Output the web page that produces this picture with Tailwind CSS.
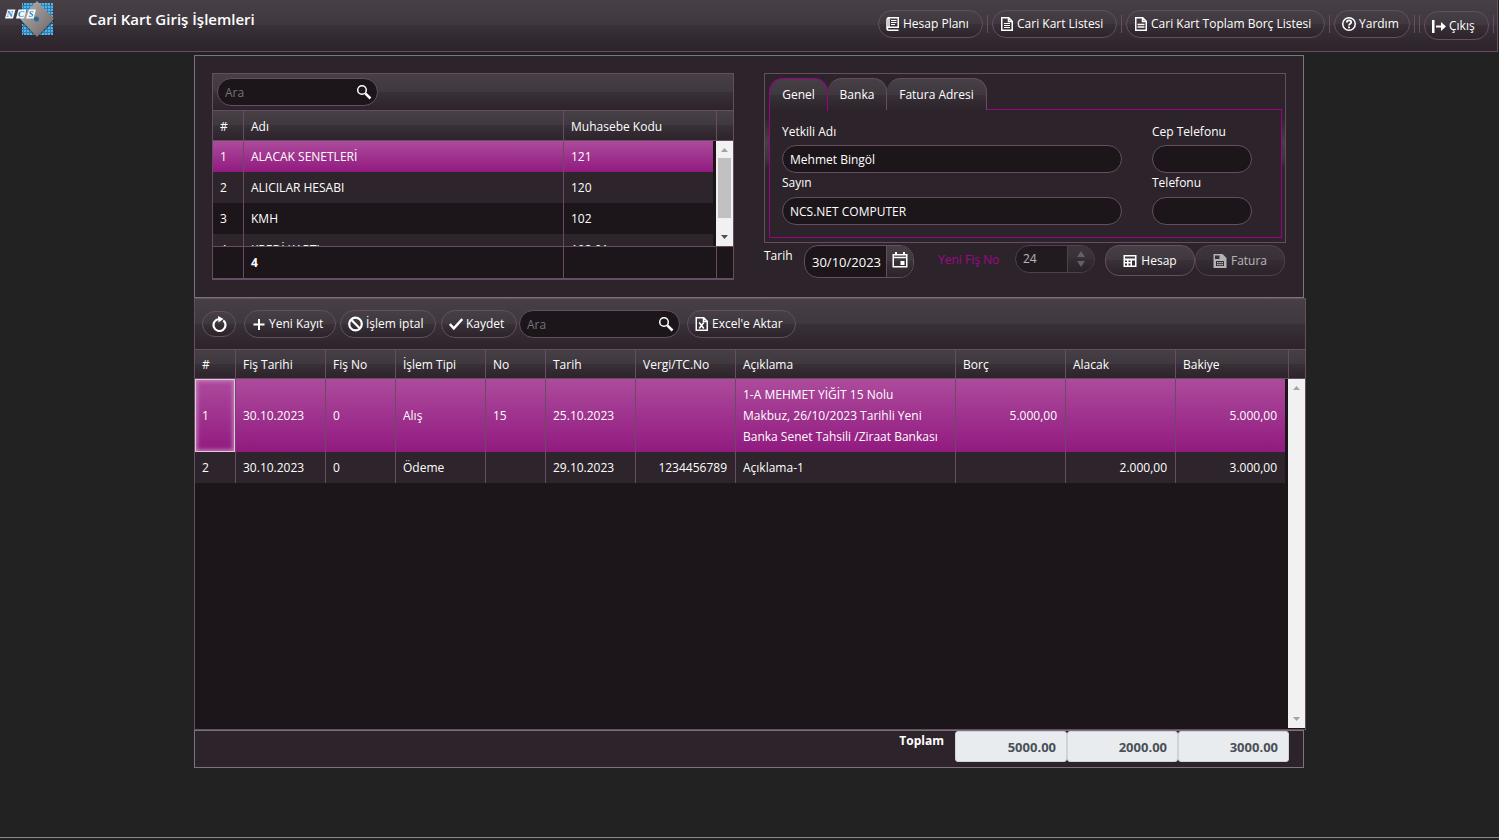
<!DOCTYPE html>
<html lang="tr">
<head>
<meta charset="utf-8">
<title>Cari Kart Giriş İşlemleri</title>
<script src="https://cdn.jsdelivr.net/npm/@tailwindcss/browser@4"></script>
<style>
  .bar { background-image: linear-gradient(#463f45, #3f383e 50%, #393138 50%, #2d232a); }
  .sel { background-image: linear-gradient(#ad4b9c, #911a80); }
  .edge > * + * { border-left: 1px solid #664d62; }
</style>
</head>
<body class="flex min-h-screen flex-col overflow-x-hidden bg-[#222222] font-['Open_Sans',sans-serif] text-xs text-white">

<header class="bar mr-px flex h-[52px] items-start justify-between border-r border-b border-[#664d62]">
  <div class="flex">
    <svg class="h-11 w-16" viewBox="0 0 64 44" aria-hidden="true">
      <defs>
        <linearGradient id="chip" x1="0" y1="0" x2="1" y2="1"><stop offset="0" stop-color="#bab3b1"/><stop offset="1" stop-color="#6a6365"/></linearGradient>
        <pattern id="dots" width="3" height="3" patternUnits="userSpaceOnUse"><path d="M0 0h2v2H0z" fill="#55b4ea"/></pattern>
      </defs>
      <path d="M25 3h24v2h4v6h-1v16h1v7h-5v1H26v-1h-4v-7h1V11h-1V5h3z" fill="#2f7fb3"/>
      <path d="M22 3h31v32H22z" fill="url(#dots)"/>
      <path d="M37 2L55 20 37 38 19 20z" fill="#1c181c" opacity=".6"/>
      <path d="M37 1L54 19 37 37 20 19z" fill="url(#chip)"/>
      <circle cx="36.500" cy="19" r="2.500" fill="#2a6c94"/>
      <path d="M7.500 9.500h8l-2.500 9H5zM18.500 9.500h8l-2.500 9h-8zM29 9.500h7l-2.500 9H26z" fill="#f6fafc"/>
      <g fill="#2583cc" font-family="Liberation Serif" font-size="9" font-style="italic" font-weight="bold"><text x="6.500" y="17">N</text><text x="18" y="17">C</text><text x="28.500" y="17">S</text></g>
    </svg>
    <h1 class="ml-6 pt-[9px] text-[15px] leading-5 font-semibold">Cari Kart Giriş İşlemleri</h1>
  </div>
  <nav class="flex items-start gap-1 pt-[10px] pr-[3px]">
    <button class="bar flex h-7 w-[105px] items-center gap-[3px] rounded-[14px] border border-[#664d62] pl-[7px]">
      <svg class="h-4 w-3.5" viewBox="1 0 14 16" fill="none" stroke="#fff"><path stroke-width="1.500" d="M4 1.750h9.250v9.500H4zM3.500 1.500C2 2 2 3 2 4v8.500c0 1.200.8 1.750 2 1.750h9.500M2 12.500c0-1 1-1.250 2-1.250"/><path d="M6 4.500h5.500M6 6.500h5.500M6 8.500h4"/></svg>Hesap Planı</button>
    <span class="mt-[5px] h-[18px] w-px bg-[#664d62]"></span>
    <button class="bar flex h-7 w-[125px] items-center gap-[3px] rounded-[14px] border border-[#664d62] pl-[7px]">
      <svg class="h-4 w-3.5" viewBox="0 0 14 16" fill="none" stroke="#fff"><path stroke-width="1.500" d="M1.750 1.750h7l3.500 3.500v9H1.750zM8.500 2v3.500H12"/><path d="M4 7.500h6M4 9.500h6M4 11.500h6"/></svg>Cari Kart Listesi</button>
    <span class="mt-[5px] h-[18px] w-px bg-[#664d62]"></span>
    <button class="bar flex h-7 w-[199px] items-center gap-[3px] rounded-[14px] border border-[#664d62] pl-[7px]">
      <svg class="h-4 w-3.5" viewBox="0 0 14 16" fill="none" stroke="#fff"><path stroke-width="1.500" d="M1.750 1.750h7l3.500 3.500v9H1.750zM8.500 2v3.500H12"/><path stroke-width="1.500" d="M3.500 8.500h7M3.500 11h7"/></svg>Cari Kart Toplam Borç Listesi</button>
    <span class="mt-[5px] h-[18px] w-px bg-[#664d62]"></span>
    <button class="bar flex h-7 w-[76px] items-center gap-[3px] rounded-[14px] border border-[#664d62] pl-[7px]">
      <svg class="h-4 w-3.5" viewBox="1 0 14 16" fill="none" stroke="#fff"><circle cx="8" cy="8" r="6.250" stroke-width="1.500"/><path stroke-width="1.800" d="M5.800 6.500c0-2.800 4.400-2.800 4.400-.3 0 1.500-2.200 1.500-2.200 3.300M8 10.500v1.800"/></svg>Yardım</button>
    <span class="mt-[5px] h-[18px] w-px bg-[#664d62]"></span>
    <span class="mt-[5px] h-[18px] w-px bg-[#664d62]"></span>
    <button class="bar mt-px flex h-[29px] w-[65px] items-center gap-[3px] rounded-[14px] border border-[#664d62] pl-[7px]">
      <svg class="h-4 w-3.5" viewBox="0 0 14 16" fill="#fff"><path d="M0 2h2.500v13H0zM4 7.500h5V4l5 4.500L9 13V9.500H4z"/></svg>Çıkış</button>
    <span class="mt-[5px] h-[18px] w-px bg-[#664d62]"></span>
  </nav>
</header>

<main class="mt-[3px] grow pl-px">
<div class="mx-auto max-w-[1112px]">

  <section class="mr-0.5 flex h-[243px] justify-between border border-[#7d747b] bg-[#2d242b] pt-[17px] pr-[17px] pl-[17px]">
    <!-- account list -->
    <div class="h-[207px] w-[522px] border border-b-2 border-[#664d62] bg-[#1c151a]">
      <div class="bar flex h-9 items-center pl-1">
        <label class="flex h-7 w-[161px] items-center justify-between rounded-[14px] border border-[#664d62] bg-[#1c151a] pr-[5px] pl-[7px]">
          <input aria-label="Ara" placeholder="Ara" class="w-28 bg-transparent pt-0.5 outline-none placeholder:text-[#77727a]">
          <svg class="size-4" viewBox="0 0 16 16" fill="none" stroke="#fff"><circle cx="6" cy="6" r="4.300" stroke-width="1.500"/><path stroke-width="2.500" d="M9.300 9.300l5.200 5.200"/></svg>
        </label>
      </div>
      <div class="border-y border-[#664d62]">
        <table class="w-full table-fixed border-separate border-spacing-0 text-left">
          <colgroup><col class="w-[30px]"><col class="w-[320px]"><col class="w-[153px]"><col></colgroup>
          <thead><tr class="bar edge h-[29px] *:pt-0.5 *:pl-[7px] *:font-normal"><th>#</th><th>Adı</th><th>Muhasebe Kodu</th><th></th></tr></thead>
        </table>
      </div>
      <div class="flex h-[105px] overflow-hidden">
        <div class="mr-[3px] grow">
          <table class="w-full table-fixed border-separate border-spacing-0">
            <colgroup><col class="w-[30px]"><col class="w-[320px]"><col></colgroup>
            <tbody>
              <tr class="sel edge h-[31px] *:pl-[7px]"><td>1</td><td>ALACAK SENETLERİ</td><td>121</td></tr>
              <tr class="edge h-[31px] bg-[#2d252b] *:pl-[7px]"><td>2</td><td>ALICILAR HESABI</td><td>120</td></tr>
              <tr class="edge h-[31px] *:pl-[7px]"><td>3</td><td>KMH</td><td>102</td></tr>
              <tr class="edge h-[31px] bg-[#2d252b] *:pl-[7px]"><td>4</td><td>KREDİ KARTI</td><td>102.01</td></tr>
            </tbody>
          </table>
        </div>
        <div class="flex w-[17px] flex-col items-center bg-[#f1f1f1]">
          <svg class="h-[17px] w-[17px]" viewBox="0 0 17 17" fill="#a3a3a3"><path d="M5 11l3.500-4 3.500 4z"/></svg>
          <div class="h-[60px] w-[13px] bg-[#c1c1c1]"></div>
          <svg class="mt-auto h-[17px] w-[17px]" viewBox="0 0 17 17" fill="#505050"><path d="M5 6l3.500 4L12 6z"/></svg>
        </div>
      </div>
      <div class="edge flex h-8 items-center border-t border-[#664d62] font-bold">
        <span class="h-full w-[30px]"></span><span class="flex h-full w-80 items-center pl-[7px]">4</span><span class="h-full w-[153px]"></span><span class="h-full grow"></span>
      </div>
    </div>

    <!-- contact details -->
    <div class="w-[522px]">
      <div class="border border-[#664d62] bg-[linear-gradient(#2d242b_26%,#453e44_40%,#3c353b_50%,#2d242b_56%)] py-1 pr-[3px] pl-1">
        <div class="flex h-8" role="tablist">
          <button class="bar z-10 -mb-px w-[59px] rounded-t-[14px] border border-b-0 border-[#9b0387]" role="tab">Genel</button>
          <button class="bar w-[59px] rounded-t-[14px] border border-b-0 border-l-0 border-[#664d62]" role="tab">Banka</button>
          <button class="bar w-[100px] rounded-t-[14px] border border-b-0 border-l-0 border-[#664d62]" role="tab">Fatura Adresi</button>
        </div>
        <div class="-mt-px flex h-[129px] justify-between border border-[#9b0387] bg-[#2d242b] pt-3 pr-[29px] pl-3">
          <div class="w-[340px]">
            <label for="yetkili" class="block h-[23px] leading-5">Yetkili Adı</label>
            <input id="yetkili" value="Mehmet Bingöl" class="block h-7 w-full rounded-[14px] border border-[#664d62] bg-[#1c151a] px-[7px]">
            <label for="sayin" class="block h-6 leading-5">Sayın</label>
            <input id="sayin" value="NCS.NET COMPUTER" class="block h-7 w-full rounded-[14px] border border-[#664d62] bg-[#1c151a] px-[7px]">
          </div>
          <div class="w-[100px]">
            <label for="cep" class="block h-[23px] leading-5">Cep Telefonu</label>
            <input id="cep" class="block h-7 w-full rounded-[14px] border border-[#664d62] bg-[#1c151a] px-[7px]">
            <label for="tel" class="block h-6 leading-5">Telefonu</label>
            <input id="tel" class="block h-7 w-full rounded-[14px] border border-[#664d62] bg-[#1c151a] px-[7px]">
          </div>
        </div>
      </div>
      <div class="mt-0.5 flex items-start">
        <label for="tarih" class="w-10 pt-px leading-5">Tarih</label>
        <div class="flex h-[33px] w-[110px] overflow-hidden rounded-[14px] border border-[#664d62] bg-[#1c151a]">
          <input id="tarih" value="30/10/2023" class="w-[81px] bg-transparent pt-0.5 pl-[7px] text-[13px]">
          <button aria-label="Takvim" class="bar flex grow items-center justify-center border-l border-[#664d62]">
            <svg class="mb-1 h-4 w-4" viewBox="0 0 16 16" fill="none" stroke="#fff"><path stroke-width="1.500" d="M1.250 2.750h13.500v12H1.250zM1.500 5.500h13"/><path stroke-width="2" d="M4 0v3M12 0v3"/><path fill="#fff" stroke="none" d="M8.500 9h4v4h-4z"/></svg>
          </button>
        </div>
        <label for="fis" class="ml-6 w-[77px] pt-[5px] leading-5 text-[#a3058e]">Yeni Fiş No</label>
        <div class="flex h-7 w-20 overflow-hidden rounded-[14px] border border-[#664d62] bg-[#1c151a] opacity-65">
          <input id="fis" value="24" disabled class="w-[51px] bg-transparent pl-[7px]">
          <div class="bar flex grow flex-col items-center justify-center gap-1 border-l border-[#664d62]">
            <svg class="h-1.5 w-2" viewBox="0 0 8 6" fill="#857e83"><path d="M0 6l4-6 4 6z"/></svg>
            <svg class="h-1.5 w-2" viewBox="0 0 8 6" fill="#857e83"><path d="M0 0l4 6 4-6z"/></svg>
          </div>
        </div>
        <button class="bar ml-2.5 flex h-[31px] w-[90px] items-center justify-center gap-1 rounded-[14px] border border-[#664d62]">
          <svg class="h-3.5 w-3.5" viewBox="0 0 14 14"><path fill="#fff" fill-rule="evenodd" d="M.5 1h13v12H.5zM2 2.500v2h10v-2zM2 6.500v1.500h2V6.500zm3.500 0v1.500h2V6.500zm3.500 0v5h3v-5zM2 9.500v2h2v-2zm3.500 0v2h2v-2z"/></svg>Hesap</button>
        <button disabled class="bar flex h-[31px] w-[90px] items-center justify-center gap-1 rounded-[14px] border border-[#664d62] opacity-65">
          <svg class="h-3.5 w-3.5" viewBox="0 0 14 14"><path fill="#fff" fill-rule="evenodd" d="M.5 0h9l4 4v10H.5zM2 1.500V5h4.500V1.500zM3 7v5h8V7z"/><path fill="#fff" d="M4 8h1.700v1.300H4zM6.200 8h1.700v1.300H6.200zM8.400 8h1.700v1.300H8.400zM4 9.900h1.700v1.300H4zM6.200 9.900h1.700v1.300H6.200zM8.400 9.900h1.700v1.300H8.400z"/></svg>Fatura</button>
      </div>
    </div>
  </section>

  <!-- transactions grid -->
  <section class="border border-[#664d62] bg-[#1c151a]">
    <div class="bar flex h-[50px] items-center pl-[7px]">
      <button aria-label="Yenile" class="bar flex h-[26px] w-[34px] items-center justify-center rounded-[13px] border border-[#664d62]">
        <svg class="size-4" viewBox="0 0 16 16"><path fill="none" stroke="#fff" stroke-width="2.200" d="M12.300 4.300A6 6 0 1 1 8 3"/><path fill="#fff" d="M7 0l5.500 3L7.500 6.500z"/></svg>
      </button>
      <button class="bar ml-2 flex h-7 w-[92px] items-center gap-[3px] rounded-[14px] border border-[#664d62] pl-[7px]">
        <svg class="h-4 w-3.5" viewBox="0 0 14 16" stroke="#fff" stroke-width="2"><path d="M7 3v11M1.500 8.500h11"/></svg>Yeni Kayıt</button>
      <button class="bar ml-1 flex h-7 w-24 items-center gap-[3px] rounded-[14px] border border-[#664d62] pl-[7px]">
        <svg class="h-4 w-[15px]" viewBox="0.500 0 15 16" fill="none" stroke="#fff" stroke-width="2.200"><circle cx="8" cy="8" r="6.300"/><path d="M3.500 3.500l9 9"/></svg>İşlem iptal</button>
      <button class="bar ml-[5px] flex h-7 w-[76px] items-center gap-[3px] rounded-[14px] border border-[#664d62] pl-[7px]">
        <svg class="h-4 w-3.5" viewBox="0 0 14 16" fill="none" stroke="#fff" stroke-width="2.500"><path d="M.8 8l4 4.300L13.300 3"/></svg>Kaydet</button>
      <label class="ml-0.5 flex h-7 w-[161px] items-center justify-between rounded-[14px] border border-[#664d62] bg-[#1c151a] pr-[5px] pl-[7px]">
        <input aria-label="Ara" placeholder="Ara" class="w-28 bg-transparent pt-0.5 outline-none placeholder:text-[#77727a]">
        <svg class="size-4" viewBox="0 0 16 16" fill="none" stroke="#fff"><circle cx="6" cy="6" r="4.300" stroke-width="1.500"/><path stroke-width="2.500" d="M9.300 9.300l5.200 5.200"/></svg>
      </label>
      <button class="bar ml-[7px] flex h-7 w-[109px] items-center gap-[3px] rounded-[14px] border border-[#664d62] pl-[7px]">
        <svg class="h-4 w-3.5" viewBox="0 0 14 16" fill="none" stroke="#fff"><path stroke-width="1.500" d="M1.250 1.750h7.500l3.500 3.500v9h-11zM8.500 2v3.500H12"/><path stroke-width="1.600" d="M4.200 6.500l4.600 6M8.800 6.500l-4.600 6"/></svg>Excel'e Aktar</button>
    </div>
    <div class="border-y border-[#664d62]">
      <table class="w-full table-fixed border-separate border-spacing-0 text-left">
        <colgroup><col class="w-10"><col class="w-[90px]"><col class="w-[70px]"><col class="w-[90px]"><col class="w-[60px]"><col class="w-[90px]"><col class="w-[100px]"><col><col class="w-[110px]"><col class="w-[110px]"><col class="w-[113px]"><col class="w-[17px]"></colgroup>
        <thead><tr class="bar edge h-7 *:pt-0.5 *:pl-[7px] *:font-normal"><th>#</th><th>Fiş Tarihi</th><th>Fiş No</th><th>İşlem Tipi</th><th>No</th><th>Tarih</th><th>Vergi/TC.No</th><th>Açıklama</th><th>Borç</th><th>Alacak</th><th>Bakiye</th><th></th></tr></thead>
      </table>
    </div>
    <div class="flex h-[350px]">
      <div class="mr-[3px] grow">
        <table class="w-full table-fixed border-separate border-spacing-0">
          <colgroup><col class="w-10"><col class="w-[90px]"><col class="w-[70px]"><col class="w-[90px]"><col class="w-[60px]"><col class="w-[90px]"><col class="w-[100px]"><col><col class="w-[110px]"><col class="w-[110px]"><col class="w-[110px]"></colgroup>
          <tbody>
            <tr class="sel edge h-[73px] *:pr-2 *:pl-[7px]"><td class="shadow-[inset_0_0_0_1px_#e3c6de,inset_0_0_4px_2px_#c98abf]">1</td><td>30.10.2023</td><td>0</td><td>Alış</td><td>15</td><td>25.10.2023</td><td></td><td class="leading-[21px]">1-A MEHMET YİĞİT 15 Nolu<br>Makbuz, 26/10/2023 Tarihli Yeni<br>Banka Senet Tahsili /Ziraat Bankası</td><td class="text-right">5.000,00</td><td></td><td class="text-right">5.000,00</td></tr>
            <tr class="edge h-[31px] bg-[#2d252b] *:pr-2 *:pl-[7px]"><td>2</td><td>30.10.2023</td><td>0</td><td>Ödeme</td><td></td><td>29.10.2023</td><td class="text-right">1234456789</td><td>Açıklama-1</td><td></td><td class="text-right">2.000,00</td><td class="text-right">3.000,00</td></tr>
          </tbody>
        </table>
      </div>
      <div class="mb-px flex w-[17px] flex-col justify-between bg-[#f1f1f1]">
        <svg class="h-[17px] w-[17px]" viewBox="0 0 17 17" fill="#a3a3a3"><path d="M5 11l3.500-4 3.500 4z"/></svg>
        <svg class="h-[17px] w-[17px]" viewBox="0 0 17 17" fill="#a3a3a3"><path d="M5 6l3.500 4L12 6z"/></svg>
      </div>
    </div>
  </section>

  <section class="mr-0.5 flex h-[38px] items-start justify-end border border-[#7d747b] bg-[#2d242b] pr-3.5">
    <span class="mr-[11px] leading-5 font-bold">Toplam</span>
    <input aria-label="Toplam Borç" readonly value="5000.00" class="h-[31px] w-28 rounded-[3px] border border-[#ced4da] bg-[#e9ecef] pr-[10px] text-right text-[13px] font-bold text-[#495057]">
    <input aria-label="Toplam Alacak" readonly value="2000.00" class="h-[31px] w-[111px] rounded-[3px] border border-[#ced4da] bg-[#e9ecef] pr-[10px] text-right text-[13px] font-bold text-[#495057]">
    <input aria-label="Toplam Bakiye" readonly value="3000.00" class="h-[31px] w-[111px] rounded-[3px] border border-[#ced4da] bg-[#e9ecef] pr-[10px] text-right text-[13px] font-bold text-[#495057]">
  </section>
</div>
</main>
<footer class="mb-0.5 border-t border-[#8a8a8a]"></footer>
</body>
</html>
